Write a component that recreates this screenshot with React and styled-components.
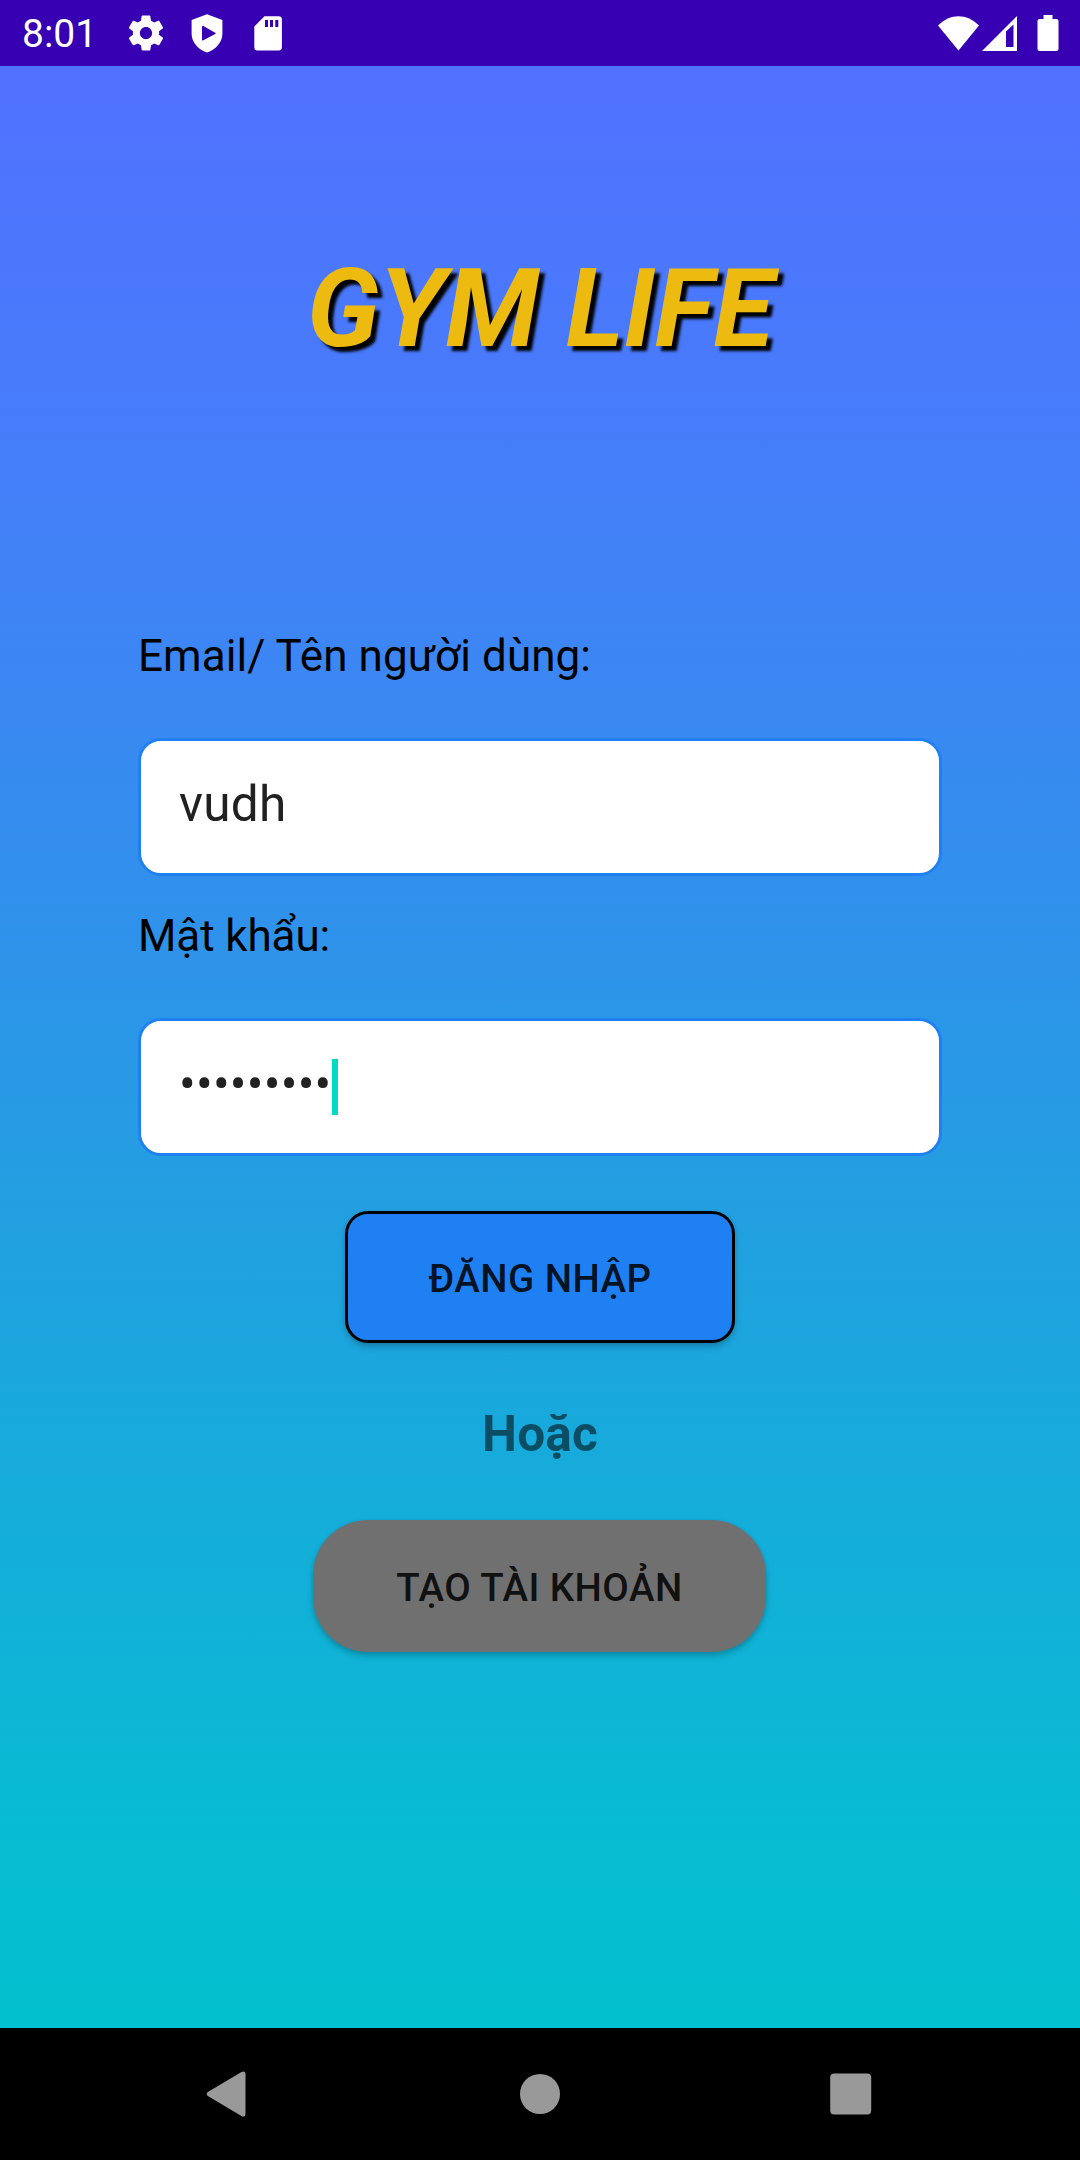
import React from "react";
import styled, { createGlobalStyle } from "styled-components";

const GlobalStyle = createGlobalStyle`
  *, *::before, *::after { box-sizing: border-box; }
  body { margin: 0; background: #000; font-family: Roboto, "Noto Sans", sans-serif; }
`;

const Screen = styled.div`
  width: 1080px;
  height: 2160px;
  display: flex;
  flex-direction: column;
  overflow: hidden;
`;

const StatusBar = styled.header`
  height: 66px;
  flex: none;
  display: flex;
  align-items: center;
  justify-content: space-between;
  padding: 0 21.5px 0 22px;
  background: #3700b3;
  color: #fff;
`;

const StatusGroup = styled.div`
  display: flex;
  align-items: center;
`;

const Clock = styled.span`
  width: 103px;
  font-size: 39px;
  line-height: 46px;
  padding-top: 2px;
`;

const Icon = styled.svg`
  display: block;
  flex: none;
  width: ${(p) => p.$w}px;
  height: ${(p) => p.$h}px;
  margin-left: ${(p) => p.$gap || 0}px;
`;

const Content = styled.main`
  height: 1962px;
  flex: none;
  display: flex;
  flex-direction: column;
  align-items: center;
  padding-top: 178px;
  background: linear-gradient(
    180deg,
    #5171ff 0%,
    #487afb 15%,
    #3e84f5 28%,
    #3091eb 43%,
    #239fe1 58%,
    #18a9dc 69%,
    #0fb4d6 82%,
    #07bcd2 90%,
    #03c0ce 100%
  );
`;

const Title = styled.h1`
  margin: 0 0 257px;
  font-size: 110px;
  line-height: 129px;
  font-weight: 700;
  font-style: italic;
  color: #edba10;
  text-shadow: 5px 5px 3px #000;
  white-space: nowrap;
`;

const Form = styled.div`
  width: 804px;
  display: flex;
  flex-direction: column;
  gap: 34px;
`;

const Field = styled.div`
  display: flex;
  flex-direction: column;
  gap: 56px;
`;

const Label = styled.span`
  font-size: 44px;
  line-height: 52px;
  letter-spacing: ${(p) => p.$tracking}px;
  color: #000;
`;

const InputBox = styled.div`
  height: 138px;
  display: flex;
  align-items: flex-start;
  padding: 34px 38px;
  border: 3px solid #1e80f2;
  border-radius: 23px;
  background: #fff;
`;

const InputText = styled.span`
  font-size: 49.5px;
  line-height: 58px;
  letter-spacing: 0.25px;
  color: #212121;
`;

const Caret = styled.span`
  width: 6px;
  height: 56px;
  margin-top: 4px;
  background: #03dac5;
`;

const Button = styled.div`
  width: ${(p) => p.$width}px;
  height: 132px;
  display: flex;
  align-items: center;
  justify-content: center;
  padding-top: 3px;
  margin-right: ${(p) => p.$nudge || 0}px;
  border: ${(p) => (p.$outlined ? "3px solid #000" : "none")};
  border-radius: ${(p) => p.$radius}px;
  background: ${(p) => p.$color};
  color: rgba(0, 0, 0, 0.87);
  font-size: 38.5px;
  line-height: 45px;
  font-weight: 500;
  letter-spacing: 0.45px;
  white-space: nowrap;
  box-shadow: 0 4px 6px rgba(0, 0, 0, 0.2), 0 1px 4px rgba(0, 0, 0, 0.06);
`;

const Actions = styled.div`
  display: flex;
  flex-direction: column;
  align-items: center;
  margin-top: 55px;
`;

const Divider = styled.span`
  margin: 62px 0 57px;
  font-size: 49.5px;
  line-height: 58px;
  font-weight: 700;
  letter-spacing: 0.2px;
  color: rgba(0, 0, 0, 0.54);
`;

const NavBar = styled.nav`
  height: 132px;
  flex: none;
  display: flex;
  align-items: center;
  padding-left: 206px;
  background: #000;
`;

function GearIcon() {
  return (
    <Icon $w={42} $h={42} viewBox="0 0 24 24" fill="#fff">
      <path d="M19.43 12.98c.04-.32.07-.64.07-.98s-.03-.66-.07-.98l2.11-1.65c.19-.15.24-.42.12-.64l-2-3.46c-.12-.22-.39-.3-.61-.22l-2.49 1c-.52-.4-1.08-.73-1.69-.98l-.38-2.65C14.46 2.18 14.25 2 14 2h-4c-.25 0-.46.18-.49.42l-.38 2.65c-.61.25-1.17.59-1.69.98l-2.49-1c-.23-.09-.49 0-.61.22l-2 3.46c-.13.22-.07.49.12.64l2.11 1.65c-.04.32-.07.65-.07.98s.03.66.07.98l-2.11 1.65c-.19.15-.24.42-.12.64l2 3.46c.12.22.39.3.61.22l2.49-1c.52.4 1.08.73 1.69.98l.38 2.65c.03.24.24.42.49.42h4c.25 0 .46-.18.49-.42l.38-2.65c.61-.25 1.17-.59 1.69-.98l2.49 1c.23.09.49 0 .61-.22l2-3.46c.12-.22.07-.49-.12-.64l-2.11-1.65zM12 15.5c-1.93 0-3.5-1.57-3.5-3.5s1.57-3.5 3.5-3.5 3.5 1.57 3.5 3.5-1.57 3.5-3.5 3.5z" />
    </Icon>
  );
}

function ShieldIcon() {
  return (
    <Icon $w={32} $h={39} $gap={24} viewBox="0 0 32 39">
      <path
        fill="#fff"
        fillRule="evenodd"
        d="M16 .3 31.4 6v13.5C31.4 28 25 35.600 16 38.500 7 35.600.6 28 .6 19.500V6ZM11 12.900V25.500Q11 26.900 12.400 26.200L24.200 20.100Q25.400 19.400 24.200 18.700L12.400 12.100Q11 11.500 11 12.900Z"
      />
    </Icon>
  );
}

function SdCardIcon() {
  return (
    <Icon $w={28} $h={35} $gap={31} viewBox="0 0 28 35">
      <path
        fill="#fff"
        fillRule="evenodd"
        d="M10.500.3H24.600Q27.900.3 27.900 3.600V31.200Q27.900 34.500 24.600 34.500H3.600Q.3 34.500.3 31.200V10.500ZM11 4V11H14V4ZM16 4V11H19V4ZM21.300 4V11H24.300V4Z"
      />
    </Icon>
  );
}

function WifiIcon() {
  return (
    <Icon $w={41} $h={35} viewBox="0 0 41 35">
      <path fill="#fff" d="M0 9.500C12-3 29-3 41 9.500L20.500 34.500Z" />
    </Icon>
  );
}

function SignalIcon() {
  return (
    <Icon $w={35} $h={35} $gap={3} viewBox="0 0 35 35">
      <path
        fill="#fff"
        fillRule="evenodd"
        d="M35 0V35H0ZM24 15.500V31H31.500V8.500Z"
      />
    </Icon>
  );
}

function BatteryIcon() {
  return (
    <Icon $w={22} $h={36} $gap={20} viewBox="0 0 22 36">
      <path
        fill="#fff"
        d="M6.500 0H15.500V4H19.500Q21.500 4 21.500 6V34Q21.500 36 19.500 36H2.500Q.5 36 .5 34V6Q.5 4 2.500 4H6.500Z"
      />
    </Icon>
  );
}

export default function App() {
  return (
    <>
      <GlobalStyle />
      <Screen>
        <StatusBar>
          <StatusGroup>
            <Clock>8:01</Clock>
            <GearIcon />
            <ShieldIcon />
            <SdCardIcon />
          </StatusGroup>
          <StatusGroup>
            <WifiIcon />
            <SignalIcon />
            <BatteryIcon />
          </StatusGroup>
        </StatusBar>

        <Content>
          <Title>GYM LIFE</Title>
          <Form>
            <Field>
              <Label $tracking={0.07}>Email/ Tên người dùng:</Label>
              <InputBox>
                <InputText>vudh</InputText>
              </InputBox>
            </Field>
            <Field>
              <Label $tracking={-0.1}>Mật khẩu:</Label>
              <InputBox>
                <InputText>•••••••••</InputText>
                <Caret />
              </InputBox>
            </Field>
          </Form>
          <Actions>
            <Button $width={390} $radius={23} $color="#1e80f2" $outlined>
              ĐĂNG NHẬP
            </Button>
            <Divider>Hoặc</Divider>
            <Button $width={453} $radius={55} $color="#707070" $nudge={1}>
              TẠO TÀI KHOẢN
            </Button>
          </Actions>
        </Content>

        <NavBar>
          <Icon $w={40} $h={46} viewBox="0 0 40 46">
            <path
              fill="#999"
              d="M1.800 21 35.500 1Q39.500 -1 39.500 3.500V42.500Q39.500 47 35.500 45L1.800 25Q-.4 23 1.800 21Z"
            />
          </Icon>
          <Icon $w={40} $h={40} $gap={274} viewBox="0 0 40 40">
            <circle cx="20" cy="20" r="20" fill="#999" />
          </Icon>
          <Icon $w={42} $h={42} $gap={270} viewBox="0 0 42 42">
            <rect x=".2" y=".5" width="41" height="41" rx="4" fill="#999" />
          </Icon>
        </NavBar>
      </Screen>
    </>
  );
}
